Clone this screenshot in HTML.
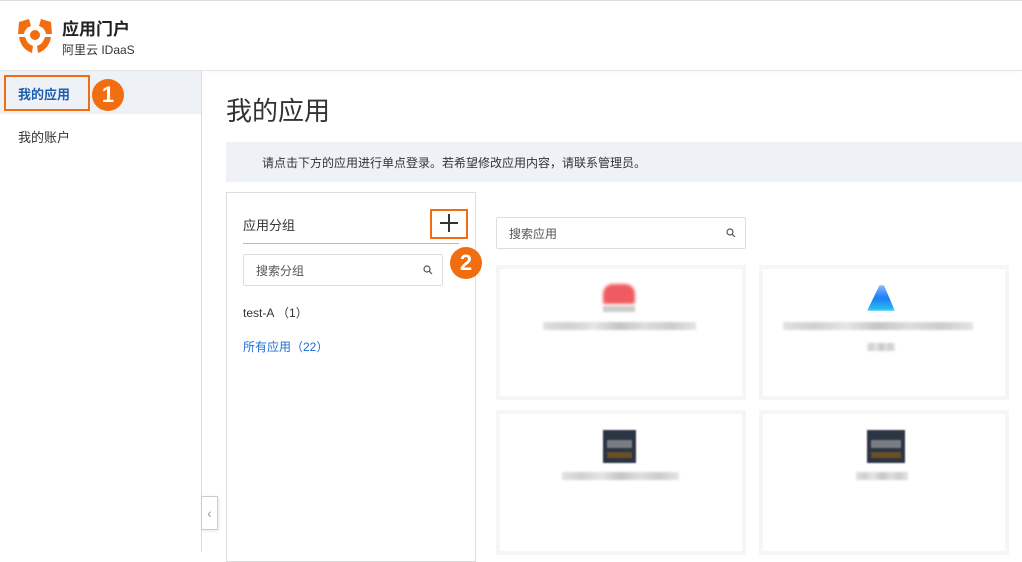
<!DOCTYPE html>
<html><head><meta charset="utf-8"><style>
*{margin:0;padding:0;box-sizing:border-box}
body{width:1022px;height:552px;overflow:hidden;background:#fff;font-family:"Liberation Sans","Noto Sans CJK SC",sans-serif;color:#333;position:relative}
.abs{position:absolute}
.blur{position:absolute;height:8px;background:linear-gradient(90deg,#ddd,#c8c8cc,#e2e2e2,#bbb,#d8d8d8,#c4c4c8,#e0e0e0);opacity:.85;filter:blur(1px)}
.card{position:absolute;background:#fff;border:4px solid #f5f6f6}
.badge{position:absolute;width:32px;height:32px;border-radius:50%;background:#f26d0f;color:#fff;font-size:22px;font-weight:bold;text-align:center;line-height:32px}
</style></head><body>
<div class="abs" style="left:0;top:0;width:1022px;height:1px;background:#ddd"></div>
<div class="abs" style="left:0;top:70px;width:1022px;height:1px;background:#e6e6e6;box-shadow:0 1px 3px rgba(0,0,0,.06)"></div>
<!-- logo -->
<svg class="abs" style="left:17px;top:18px" width="36" height="36" viewBox="0 0 36 36">
<path d="M2 4 L12 1 L14 8 Q8 10 7 16 L1 16 Z" fill="#f26d0f"/>
<path d="M34 4 L24 1 L22 8 Q28 10 29 16 L35 16 Z" fill="#f26d0f"/>
<path d="M2 19 L8 19 Q10 26 16 28 L15 35 Q4 31 2 19Z" fill="#f26d0f"/>
<path d="M34 19 L28 19 Q26 26 20 28 L21 35 Q32 31 34 19Z" fill="#f26d0f"/>
<circle cx="18" cy="17" r="5" fill="#f26d0f"/>
</svg>
<div class="abs" style="left:62px;top:15px;font-size:17px;font-weight:bold;color:#222">应用门户</div>
<div class="abs" style="left:62px;top:41px;font-size:12px;color:#333">阿里云 IDaaS</div>
<!-- sidebar -->
<div class="abs" style="left:0;top:71px;width:201px;height:43px;background:#eef1f6"></div>
<div class="abs" style="left:201px;top:71px;width:1px;height:481px;background:#ddd"></div>
<div class="abs" style="left:4px;top:75px;width:86px;height:36px;border:2px solid #f26d0f"></div>
<div class="abs" style="left:18px;top:84px;font-size:13px;font-weight:bold;color:#1f5fb0">我的应用</div>
<div class="badge" style="left:92px;top:79px">1</div>
<div class="abs" style="left:18px;top:127px;font-size:13px;color:#333">我的账户</div>
<div class="abs" style="left:201px;top:496px;width:17px;height:34px;border:1px solid #ccc;background:#fff;color:#999;font-size:14px;text-align:center;line-height:32px;box-shadow:1px 1px 3px rgba(0,0,0,.1)">‹</div>
<!-- main -->
<div class="abs" style="left:226px;top:91px;font-size:26px;color:#333">我的应用</div>
<div class="abs" style="left:226px;top:142px;width:796px;height:40px;background:#eef1f6"></div>
<div class="abs" style="left:262px;top:154px;font-size:12px;color:#333">请点击下方的应用进行单点登录。若希望修改应用内容，请联系管理员。</div>
<!-- group panel -->
<div class="abs" style="left:226px;top:192px;width:250px;height:370px;border:1px solid #ddd"></div>
<div class="abs" style="left:243px;top:215px;font-size:13px;color:#333">应用分组</div>
<div class="abs" style="left:243px;top:243px;width:216px;height:1px;background:#bbb"></div>
<div class="abs" style="left:430px;top:209px;width:38px;height:30px;border:2px solid #f26d0f"></div>
<div class="abs" style="left:440px;top:222px;width:18px;height:2px;background:#333"></div>
<div class="abs" style="left:448px;top:214px;width:2px;height:18px;background:#333"></div>
<div class="badge" style="left:450px;top:247px">2</div>
<div class="abs" style="left:243px;top:254px;width:200px;height:32px;border:1px solid #ddd;border-radius:2px"></div>
<div class="abs" style="left:256px;top:262px;font-size:12px;color:#555">搜索分组</div>
<svg class="abs" style="left:423px;top:265px" width="10" height="10" viewBox="0 0 10 10"><circle cx="4" cy="4" r="3" fill="none" stroke="#555" stroke-width="1.2"/><path d="M6.3 6.3 L9 9" stroke="#555" stroke-width="1.2"/></svg>
<div class="abs" style="left:243px;top:304px;font-size:12px;color:#333">test-A （1）</div>
<div class="abs" style="left:243px;top:338px;font-size:12px;color:#1f6fd0">所有应用（22）</div>
<!-- search -->
<div class="abs" style="left:496px;top:217px;width:250px;height:32px;border:1px solid #ddd;border-radius:2px"></div>
<div class="abs" style="left:509px;top:225px;font-size:12px;color:#555">搜索应用</div>
<svg class="abs" style="left:726px;top:228px" width="10" height="10" viewBox="0 0 10 10"><circle cx="4" cy="4" r="3" fill="none" stroke="#555" stroke-width="1.2"/><path d="M6.3 6.3 L9 9" stroke="#555" stroke-width="1.2"/></svg>
<!-- cards -->
<div class="card" style="left:496px;top:265px;width:250px;height:135px"></div>
<div class="card" style="left:759px;top:265px;width:250px;height:135px"></div>
<div class="card" style="left:496px;top:410px;width:250px;height:145px"></div>
<div class="card" style="left:759px;top:410px;width:250px;height:145px"></div>
<div class="abs" style="left:603px;top:284px;width:32px;height:20px;background:#ef5b60;border-radius:10px 10px 2px 2px;filter:blur(1.5px)"></div>
<div class="abs" style="left:603px;top:306px;width:32px;height:6px;background:#ccc;filter:blur(1px)"></div>
<div class="blur" style="left:543px;top:322px;width:153px"></div>
<div class="abs" style="left:867px;top:285px;width:28px;height:26px;background:linear-gradient(#8ab8ff,#1a7cf5 50%,#2cc6f0);clip-path:polygon(45% 0,60% 0,100% 100%,0 100%);filter:blur(1px)"></div>
<div class="blur" style="left:783px;top:322px;width:190px"></div>
<div class="blur" style="left:867px;top:343px;width:28px"></div>
<div class="abs" style="left:603px;top:430px;width:33px;height:33px;background:#2c3544;filter:blur(.8px)"></div>
<div class="abs" style="left:607px;top:440px;width:25px;height:8px;background:#7a7d84;filter:blur(.8px)"></div>
<div class="abs" style="left:607px;top:452px;width:25px;height:6px;background:#6b4f25;filter:blur(.8px)"></div>
<div class="blur" style="left:562px;top:472px;width:117px"></div>
<div class="abs" style="left:867px;top:430px;width:38px;height:33px;background:#2c3544;filter:blur(.8px)"></div>
<div class="abs" style="left:871px;top:440px;width:30px;height:8px;background:#7a7d84;filter:blur(.8px)"></div>
<div class="abs" style="left:871px;top:452px;width:30px;height:6px;background:#6b4f25;filter:blur(.8px)"></div>
<div class="blur" style="left:856px;top:472px;width:52px"></div>
</body></html>
